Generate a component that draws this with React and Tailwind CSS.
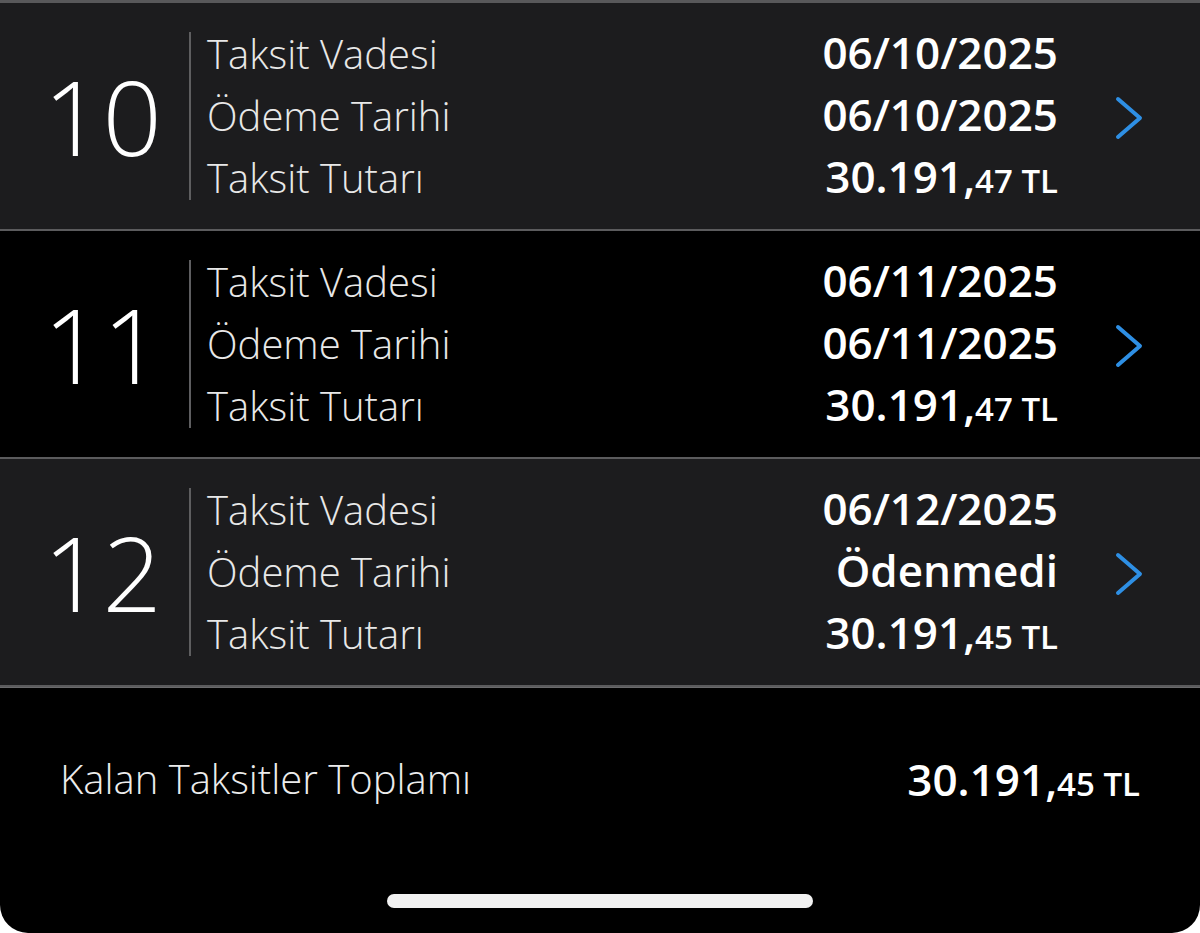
const installments = [
  { no: 10, due: '06/10/2025', paid: '06/10/2025', whole: '30.191', cents: '47', bg: 'bg-[#1c1c1e]' },
  { no: 11, due: '06/11/2025', paid: '06/11/2025', whole: '30.191', cents: '47', bg: 'bg-black' },
  { no: 12, due: '06/12/2025', paid: 'Ödenmedi', whole: '30.191', cents: '45', bg: 'bg-[#1c1c1e]' },
];

const font = { fontFamily: '"Open Sans", "Noto Sans", sans-serif' };

function Amount({ whole, cents, className = '' }) {
  return (
    <span className={`font-semibold text-white ${className}`}>
      {whole},<span className="text-[33px]">{cents} TL</span>
    </span>
  );
}

// thin blue disclosure arrow
function Chevron() {
  return (
    <svg width="30" height="46" viewBox="0 0 30 46" fill="none">
      <path d="M4 4 L26 23 L4 42" stroke="#2e8fe4" strokeWidth="4" strokeLinecap="round" strokeLinejoin="round" />
    </svg>
  );
}

function InstallmentRow({ item }) {
  return (
    <div className={`flex h-[228px] items-center border-b-2 border-[#5b5b5d] ${item.bg}`}>
      <div className="w-[189px] pl-4 text-center text-[104px] font-light leading-none text-white">
        {item.no}
      </div>
      <div className="h-[168px] w-[2px] bg-[#5e5e60]" />
      <div className="flex flex-col pl-4 text-[40px] font-light leading-[62px] text-[#e8e8e8]">
        <span>Taksit Vadesi</span>
        <span>Ödeme Tarihi</span>
        <span>Taksit Tutarı</span>
      </div>
      <div className="ml-auto flex flex-col items-end text-[44px] font-semibold leading-[62px] text-white">
        <span>{item.due}</span>
        <span>{item.paid}</span>
        <Amount whole={item.whole} cents={item.cents} />
      </div>
      <div className="ml-[56px] mr-[56px] flex items-center pt-1">
        <Chevron />
      </div>
    </div>
  );
}

export default function App() {
  return (
    <div className="h-[933px] w-[1200px] overflow-hidden bg-white" style={font}>
      <div className="flex h-full flex-col overflow-hidden rounded-b-[28px] bg-black">
        <div className="h-[3px] bg-[#58585a]" />
        {installments.map((item) => (
          <InstallmentRow key={item.no} item={item} />
        ))}
        <div className="h-[1px] bg-[#6a6a6c]" />
        <div className="flex items-center justify-between px-[60px] pt-[58px]">
          <span className="text-[40px] font-light text-[#ececec]">Kalan Taksitler Toplamı</span>
          <Amount whole="30.191" cents="45" className="text-[44px]" />
        </div>
        <div className="mt-auto mb-[25px] flex justify-center">
          <div className="h-[14px] w-[426px] rounded-full bg-[#f2f2f2]" />
        </div>
      </div>
    </div>
  );
}
